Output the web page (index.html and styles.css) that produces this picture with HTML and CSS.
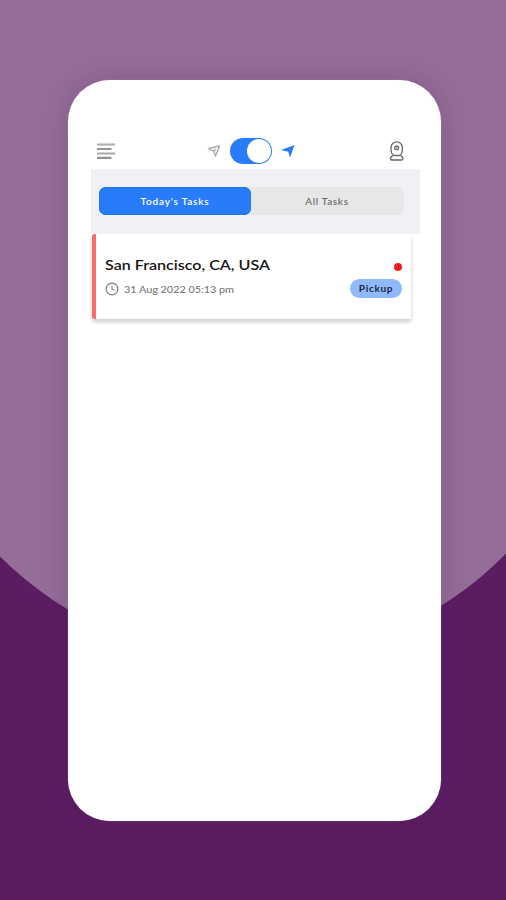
FILE: index.html
```html
<!DOCTYPE html>
<html lang="en">
<head>
<meta charset="utf-8">
<title>Tasks</title>
<link rel="stylesheet" href="styles.css">
</head>
<body>
<svg class="backdrop" viewBox="0 0 506 900" aria-hidden="true"><path fill="#946d98" d="M0 0H506V553.500A356 356 0 0 1 0 556.500Z"/></svg>
<main class="phone">
  <header class="topbar">
    <svg class="menu" width="19" height="17" viewBox="0 0 19 17" fill="none" stroke-width="2.200"><path stroke="#aaa" d="M0 1.500H18M0 10.500H18"/><path stroke="#929292" d="M0 6H14.500M0 14.800H14.500"/></svg>
    <div class="duty">
      <svg width="14" height="14" viewBox="0 0 14 14" fill="none" stroke="#aaa" stroke-width="1.400" stroke-linejoin="round"><path d="M1.500 4.500L12.500 2L8.500 12L6.800 7.200Z"/><path d="M6.800 7.200L9 5"/></svg>
      <span class="switch"></span>
      <svg width="14" height="14" viewBox="0 0 14 14" fill="#287cfa"><path d="M0 6L13.500 1L9 13.500L7.300 7.800Z"/></svg>
    </div>
    <svg class="camera" width="16" height="20" viewBox="0 0 16 20" fill="none" stroke="#666" stroke-width="1.300" stroke-linejoin="round"><path d="M4.500 14.500C2.700 13 2 11.500 2 9V6.500a5.700 5.700 0 0 1 11.400 0V9c0 2.500-.7 4-2.500 5.500Z"/><circle cx="7.700" cy="6.700" r="1.900"/><path d="M7.700 6.700V5.300M3.500 14.500L1.500 17Q1.300 19 3 19H12.400Q14.200 19 13.900 17L12 14.500"/></svg>
  </header>
  <nav class="tabs">
    <div class="segment">
      <span class="tab active">Today's Tasks</span>
      <span class="tab">All Tasks</span>
    </div>
  </nav>
  <article class="card">
    <div class="row">
      <h1><svg width="166" height="18"><text x="0" y="13" textLength="165" lengthAdjust="spacingAndGlyphs">San Francisco, CA, USA</text></svg></h1>
      <span class="alert"></span>
    </div>
    <div class="row second">
      <div class="time">
        <svg width="14" height="14" viewBox="0 0 14 14" fill="none" stroke="#777" stroke-width="1.100"><circle cx="7" cy="7" r="5.900"/><path d="M7 3.700V7.200L9.300 8"/></svg>
        <svg class="date" width="112" height="16"><text x="0" y="12" textLength="110" lengthAdjust="spacingAndGlyphs">31 Aug 2022 05:13 pm</text></svg>
      </div>
      <span class="pill">Pickup</span>
    </div>
  </article>
</main>
</body>
</html>
```

FILE: styles.css
```css
* { box-sizing: border-box; }
body {
  margin: 0;
  height: 900px;
  padding: 80px 65px 0 68px;
  background: #5b1d62;
  font-family: Lato, sans-serif;
  overflow: hidden;
}
.backdrop { position: absolute; inset: 0; width: 506px; height: 900px; }
.phone {
  position: relative;
  width: 373px;
  height: 741px;
  padding: 53px 21px 0 23px;
  border-radius: 42px;
  background: #fff;
  box-shadow: 0 0 28px rgba(75, 20, 85, .22), 0 0 1px #d9c8dc;
}
svg { display: block; flex: none; }
.topbar { height: 36px; display: flex; align-items: center; justify-content: space-between; padding: 0 15px 0 6px; }
.duty { display: flex; align-items: center; gap: 9px; margin-right: 3px; }
.switch { width: 42px; height: 26px; border-radius: 13px; background: #287cfa; display: flex; justify-content: flex-end; padding: 1px; }
.switch::after { content: ""; width: 24px; height: 24px; border-radius: 50%; background: #fff; }
.tabs { height: 65px; padding: 18px 16px 0 8px; background: #f1f1f5; }
.segment { height: 28px; display: flex; background: #e7e7e8; border-radius: 7px; }
.tab { width: 152px; font: 500 10px/28px Lato, sans-serif; color: #666; text-align: center; border-radius: 7px; letter-spacing: .65px; }
.tab.active { color: #fff; background: #287cfa; font-weight: 600; letter-spacing: .8px; box-shadow: inset 0 0 0 1px #197aed; }
.card {
  width: 319px;
  height: 85px;
  margin-left: 1px;
  padding: 22px 9px 0 9px;
  border-left: 4px solid #fa6b69;
  border-radius: 3px 0 0 3px;
  background: #fff;
  box-shadow: 0 3px 4px rgba(0, 0, 0, .2);
}
.row { display: flex; align-items: center; justify-content: space-between; height: 19px; }
h1 { margin: 0; font: 600 14px/18px Lato, sans-serif; }
h1 text { fill: #151515; }
.alert { width: 8px; height: 8px; margin-top: 3px; border-radius: 50%; background: #f51b20; display: flex; justify-content: center; align-items: center; }
.alert::after { content: ""; width: 1px; height: 4px; background: #b80c11; }
.second { margin-top: 4px; }
.time { display: flex; align-items: center; gap: 5px; }
.date { font: 500 10px Lato, sans-serif; fill: #777; }
.pill { width: 52px; height: 19px; border-radius: 10px; background: #90b9fb; color: #17263e; font: 700 10px/19px Lato, sans-serif; letter-spacing: .7px; text-align: center; }
```
